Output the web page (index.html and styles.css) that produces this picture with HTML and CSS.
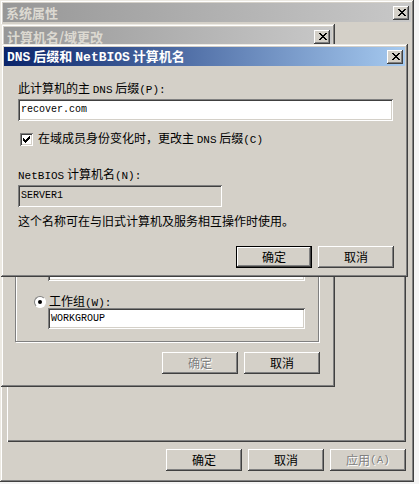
FILE: index.html
```html
<!DOCTYPE html>
<html>
<head>
    <title>系统属性</title>
    <link rel="stylesheet" href="styles.css">
</head>
<body>
    <!-- System properties (back) -->
    <div class="win outer">
        <div class="title off">
            <span>系统属性</span>
            <span class="close"><svg width="8" height="7" viewBox="0 0 8 7" shape-rendering="crispEdges"><path d="M0 0h2v1H0zM6 0h2v1H6zM1 1h2v1H1zM5 1h2v1H5zM2 2h4v1H2zM3 3h2v1H3zM2 4h4v1H2zM1 5h2v1H1zM5 5h2v1H5zM0 6h2v1H0zM6 6h2v1H6z"/></svg></span>
        </div>
        <div class="outer-body">
            <div class="tabpanel"></div>
            <div class="btnrow">
                <div class="btn">确定</div>
                <div class="btn">取消</div>
                <div class="btn dis">应用<span class="a">(A)</span></div>
            </div>
        </div>
    </div>

    <!-- Computer name / domain changes (middle) -->
    <div class="win mid">
        <div class="title off">
            <span>计算机名/域更改</span>
            <span class="close"><svg width="8" height="7" viewBox="0 0 8 7" shape-rendering="crispEdges"><path d="M0 0h2v1H0zM6 0h2v1H6zM1 1h2v1H1zM5 1h2v1H5zM2 2h4v1H2zM3 3h2v1H3zM2 4h4v1H2zM1 5h2v1H1zM5 5h2v1H5zM0 6h2v1H0zM6 6h2v1H6z"/></svg></span>
        </div>
        <div class="mid-body">
            <div class="group">
                <div class="radio-row"><span class="radio"></span><span>域<span class="a">(D):</span></span></div>
                <div class="field dom"></div>
                <div class="radio-row"><span class="radio on"></span><span>工作组<span class="a">(W):</span></span></div>
                <div class="field">WORKGROUP</div>
            </div>
            <div class="btnrow">
                <div class="btn dis">确定</div>
                <div class="btn">取消</div>
            </div>
        </div>
    </div>

    <!-- DNS suffix and NetBIOS name (front) -->
    <div class="win dns">
        <div class="title on">
            <span><span class="a">DNS</span> 后缀和 <span class="a">NetBIOS</span> 计算机名</span>
            <span class="close"><svg width="8" height="7" viewBox="0 0 8 7" shape-rendering="crispEdges"><path d="M0 0h2v1H0zM6 0h2v1H6zM1 1h2v1H1zM5 1h2v1H5zM2 2h4v1H2zM3 3h2v1H3zM2 4h4v1H2zM1 5h2v1H1zM5 5h2v1H5zM0 6h2v1H0zM6 6h2v1H6z"/></svg></span>
        </div>
        <div class="dns-body">
            <div class="label">此计算机的主 <span class="a">DNS</span> 后缀<span class="a">(P):</span></div>
            <div class="field suffix">recover.com</div>
            <div class="check-row">
                <span class="check"><svg width="7" height="7" viewBox="0 0 7 7" shape-rendering="crispEdges"><path d="M6 0h1v3H6zM5 1h1v3H5zM4 2h1v3H4zM0 2h1v3H0zM1 3h1v3H1zM2 4h1v3H2zM3 3h1v3H3z"/></svg></span>
                <span>在域成员身份变化时，更改主 <span class="a">DNS</span> 后缀<span class="a">(C)</span></span>
            </div>
            <div class="label nb"><span class="a">NetBIOS</span> 计算机名<span class="a">(N):</span></div>
            <div class="field ro">SERVER1</div>
            <div class="label desc">这个名称可在与旧式计算机及服务相互操作时使用。</div>
            <div class="btnrow">
                <div class="btn def">确定</div>
                <div class="btn">取消</div>
            </div>
        </div>
    </div>
</body>
</html>
```

FILE: styles.css
```css
* {
    box-sizing: border-box;
}
body {
    margin: 0;
    width: 419px;
    height: 484px;
    position: relative;
    overflow: hidden;
    background-color: #f4f4f4;
    font-family: "Noto Sans CJK SC", sans-serif;
    font-size: 12px;
    line-height: 14px;
    color: #000;
}
.a {
    font-family: "Liberation Mono", monospace;
    font-size: 11px;
}
.win {
    position: absolute;
    display: flex;
    flex-direction: column;
    padding: 3px;
    background-color: #d4d0c8;
    box-shadow: inset -1px -1px #404040, inset 1px 1px #ece9e2, inset -2px -2px #808080, inset 2px 2px #fff;
}
.outer {
    left: 0;
    top: 0;
    width: 414px;
    height: 482px;
}
.mid {
    left: 1px;
    top: 24px;
    width: 334px;
    height: 363px;
}
.dns {
    left: 1px;
    top: 44px;
    width: 407px;
    height: 233px;
}
.title {
    flex: none;
    height: 19px;
    display: flex;
    align-items: center;
    justify-content: space-between;
    padding: 0 2px 0 3px;
    font-weight: bold;
    font-size: 13px;
    line-height: 19px;
}
.title .a {
    font-size: 13px;
}
.title.off {
    background: linear-gradient(to right, #979797, #c8c8c8);
    color: #dcd9d1;
}
.title.on {
    background: linear-gradient(to right, #0a246a, #a6caf0);
    color: #fff;
}
.close {
    width: 16px;
    height: 14px;
    display: flex;
    align-items: center;
    justify-content: center;
    padding-left: 1px;
    background-color: #d4d0c8;
    box-shadow: inset -1px -1px #404040, inset 1px 1px #fff, inset -2px -2px #808080;
}
.btnrow {
    display: flex;
    justify-content: flex-end;
    gap: 6px;
}
.btn {
    width: 76px;
    height: 22px;
    display: flex;
    align-items: center;
    justify-content: center;
    background-color: #d4d0c8;
    box-shadow: inset -1px -1px #404040, inset 1px 1px #fff, inset -2px -2px #808080;
}
.btn.def {
    box-shadow: inset 0 0 0 1px #000, inset -2px -2px #404040, inset 2px 2px #fff, inset -3px -3px #808080;
}
.btn.dis {
    color: #808080;
    text-shadow: 1px 1px #fff;
}
.field {
    height: 21px;
    display: flex;
    align-items: center;
    padding: 0 3px;
    background-color: #fff;
    font-family: "Liberation Mono", monospace;
    font-size: 10px;
    box-shadow: inset 1px 1px #808080, inset -1px -1px #fff, inset 2px 2px #404040, inset -2px -2px #d4d0c8;
}
.field.ro {
    width: 204px;
    height: 22px;
    background-color: #d4d0c8;
}

/* outer window */
.outer-body {
    flex: 1;
    display: flex;
    flex-direction: column;
    padding: 0 5px 8px 4px;
}
.tabpanel {
    flex: 1;
    margin-top: 30px;
    box-shadow: inset 1px 1px #fff, inset -1px -1px #404040, inset -2px -2px #808080;
}
.outer-body .btnrow {
    margin-top: 7px;
}

/* middle window */
.mid-body {
    flex: 1;
    display: flex;
    flex-direction: column;
    justify-content: flex-end;
    padding: 0 13px 10px 11px;
}
.group {
    display: flex;
    flex-direction: column;
    padding: 10px 13px 12px 32px;
    border: 1px solid #808080;
    box-shadow: 1px 1px 0 #fff, inset 1px 1px #fff;
}
.radio-row {
    height: 13px;
    display: flex;
    align-items: center;
    gap: 3px;
    margin-left: -14px;
}
.radio {
    position: relative;
    width: 12px;
    height: 12px;
    border-radius: 50%;
    background-color: #fff;
    border: 1px solid;
    border-color: #808080 #fff #fff #808080;
}
.radio.on::after {
    content: "";
    position: absolute;
    left: 3px;
    top: 3px;
    width: 4px;
    height: 4px;
    border-radius: 50%;
    background-color: #000;
}
.field.dom {
    margin: 3px 0 14px;
}
.mid-body .btnrow {
    margin-top: 10px;
    margin-right: -1px;
}

/* dns window */
.dns-body {
    flex: 1;
    display: flex;
    flex-direction: column;
    padding: 15px 12px 0 14px;
}
.field.suffix {
    height: 22px;
    margin-top: 2px;
}
.check-row {
    height: 14px;
    margin-top: 11px;
    display: flex;
    align-items: center;
    gap: 5px;
}
.check {
    width: 13px;
    height: 13px;
    margin-left: 2px;
    display: flex;
    align-items: center;
    justify-content: center;
    background-color: #fff;
    box-shadow: inset 1px 1px #808080, inset -1px -1px #fff, inset 2px 2px #404040, inset -2px -2px #d4d0c8;
}
.label.nb {
    margin-top: 21px;
}
.field.ro {
    margin-top: 2px;
}
.label.desc {
    margin-top: 7px;
}
.dns-body .btnrow {
    margin-top: 18px;
    margin-right: -1px;
}
```
